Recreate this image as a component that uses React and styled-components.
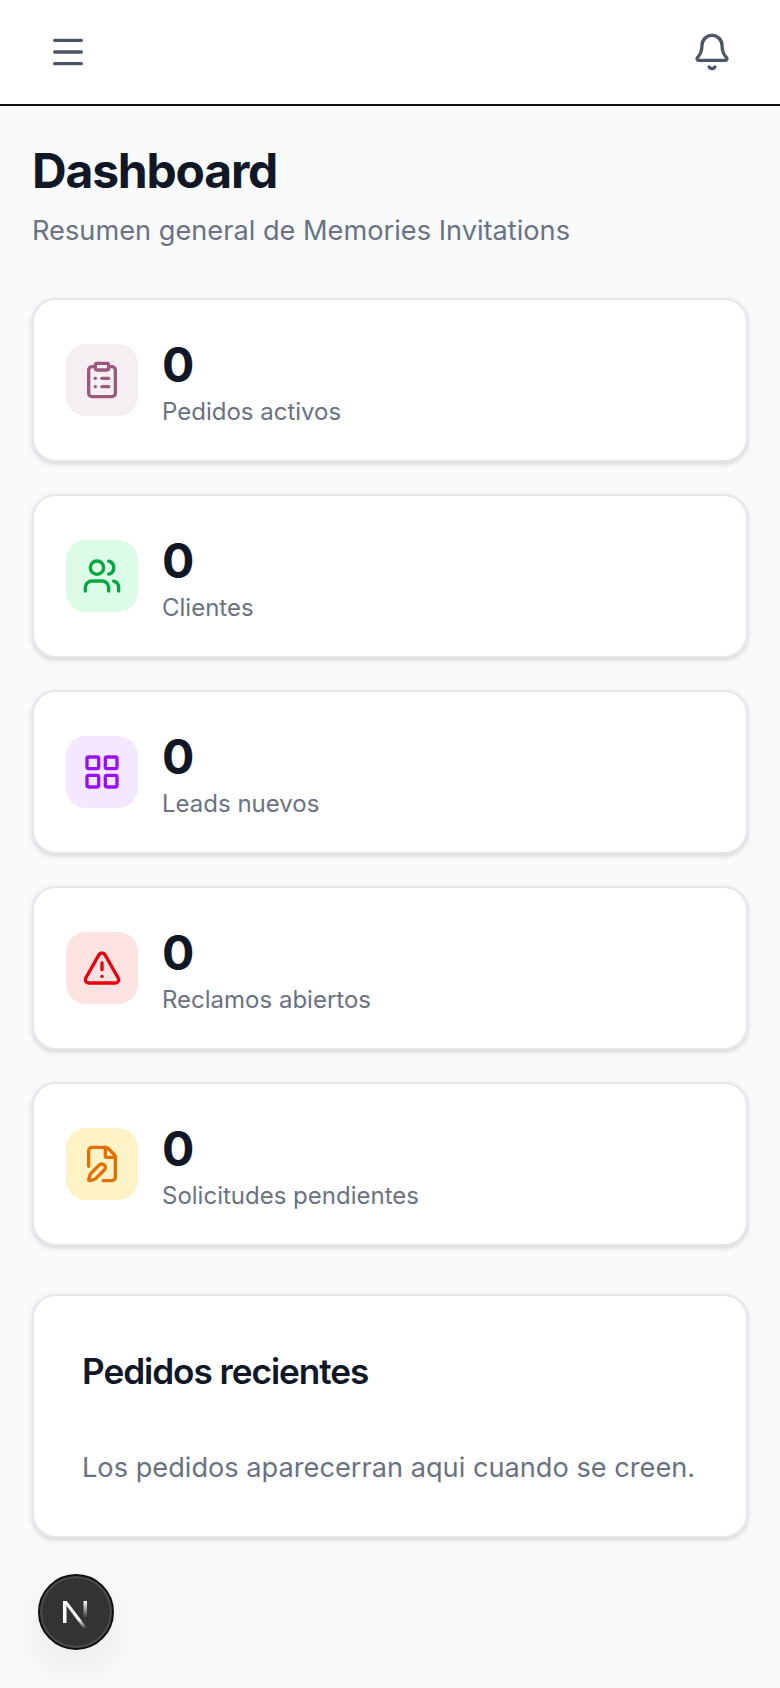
import React from "react";
import styled, { createGlobalStyle } from "styled-components";
import { Bell, ClipboardList, FilePen, LayoutGrid, Menu, TriangleAlert, Users } from "lucide-react";

const stats = [
  { label: "Pedidos activos", value: 0, Icon: ClipboardList, color: "#9b5a7d", bg: "#f5eff3" },
  { label: "Clientes", value: 0, Icon: Users, color: "#00a63e", bg: "#dcfce7" },
  { label: "Leads nuevos", value: 0, Icon: LayoutGrid, color: "#9810fa", bg: "#f3e8ff" },
  { label: "Reclamos abiertos", value: 0, Icon: TriangleAlert, color: "#e7000b", bg: "#ffe2e2" },
  { label: "Solicitudes pendientes", value: 0, Icon: FilePen, color: "#e17100", bg: "#fef3c6" },
];

const GlobalStyle = createGlobalStyle`
  html, body {
    margin: 0;
    padding: 0;
    background: #f9fafb;
    font-family: Inter, "Liberation Sans", sans-serif;
  }
  * {
    box-sizing: border-box;
  }
`;

const Page = styled.div`
  min-height: 100vh;
  background: #f9fafb;
`;

const Header = styled.header`
  display: flex;
  align-items: center;
  justify-content: space-between;
  height: 106px;
  padding: 0 48px;
  background: #fff;
  border-bottom: 2px solid #111;
  color: #4a5565;
`;

const Main = styled.main`
  padding: 32px;
`;

const Title = styled.h1`
  margin: 0;
  font-size: 48px;
  line-height: 66px;
  font-weight: 700;
  letter-spacing: -1.2px;
  color: #101828;
`;

const Subtitle = styled.p`
  margin: 7px 0 47px;
  font-size: 27.2px;
  line-height: 40px;
  color: #6a7282;
`;

const StatList = styled.div`
  display: flex;
  flex-direction: column;
  gap: 32px;
`;

const Card = styled.section`
  background: #fff;
  border: 2px solid #e5e7eb;
  border-radius: 24px;
  box-shadow: 0 2px 6px rgba(0, 0, 0, 0.1), 0 2px 4px rgba(0, 0, 0, 0.06);
`;

const StatCard = styled(Card)`
  display: flex;
  align-items: center;
  gap: 24px;
  padding: 32px;
`;

const IconBox = styled.div`
  display: flex;
  align-items: center;
  justify-content: center;
  width: 72px;
  height: 72px;
  border-radius: 20px;
  background: ${(p) => p.$bg};
  color: ${(p) => p.$color};
`;

const StatValue = styled.div`
  font-size: 48px;
  line-height: 66px;
  font-weight: 700;
  color: #101828;
`;

const StatLabel = styled.div`
  margin-bottom: 2px;
  font-size: 24px;
  line-height: 28px;
  color: #6a7282;
`;

const RecentCard = styled(Card)`
  margin-top: 48px;
  padding: 48px;
`;

const RecentTitle = styled.h2`
  margin: 0 0 50px;
  font-size: 35.2px;
  line-height: 54px;
  font-weight: 600;
  letter-spacing: -1.05px;
  color: #101828;
`;

const RecentText = styled.p`
  margin: 0;
  font-size: 27.2px;
  line-height: 40px;
  color: #6a7282;
`;

const DevBadge = styled.div`
  position: fixed;
  left: 38px;
  bottom: 38px;
  display: flex;
  align-items: center;
  justify-content: center;
  width: 76px;
  height: 76px;
  border-radius: 50%;
  background: #333;
  border: 2px solid #111;
  box-shadow: inset 0 0 0 2px #4d4d4d, 0 16px 48px rgba(0, 0, 0, 0.08);
`;

function NextMark() {
  return (
    <svg width="32" height="32" viewBox="0 0 32 32" fill="none">
      <defs>
        <linearGradient id="nDiag" x1="14" y1="14" x2="27" y2="32" gradientUnits="userSpaceOnUse">
          <stop offset="0.45" stopColor="#fff" />
          <stop offset="1" stopColor="#fff" stopOpacity="0" />
        </linearGradient>
        <linearGradient id="nStem" x1="25" y1="5" x2="25" y2="22" gradientUnits="userSpaceOnUse">
          <stop stopColor="#fff" />
          <stop offset="1" stopColor="#fff" stopOpacity="0" />
        </linearGradient>
      </defs>
      <path d="M3 5h3.5v22H3z" fill="#fff" />
      <path d="M3 5h3.8l20.4 27h-4z" fill="url(#nDiag)" />
      <path d="M23.5 5h3.5v18h-3.5z" fill="url(#nStem)" />
    </svg>
  );
}

export default function App() {
  return (
    <Page>
      <GlobalStyle />
      <Header>
        <Menu size={40} />
        <Bell size={40} />
      </Header>
      <Main>
        <Title>Dashboard</Title>
        <Subtitle>Resumen general de Memories Invitations</Subtitle>
        <StatList>
          {stats.map(({ label, value, Icon, color, bg }) => (
            <StatCard key={label}>
              <IconBox $color={color} $bg={bg}>
                <Icon size={40} />
              </IconBox>
              <div>
                <StatValue>{value}</StatValue>
                <StatLabel>{label}</StatLabel>
              </div>
            </StatCard>
          ))}
        </StatList>
        <RecentCard>
          <RecentTitle>Pedidos recientes</RecentTitle>
          <RecentText>Los pedidos aparecerran aqui cuando se creen.</RecentText>
        </RecentCard>
      </Main>
      <DevBadge>
        <NextMark />
      </DevBadge>
    </Page>
  );
}
